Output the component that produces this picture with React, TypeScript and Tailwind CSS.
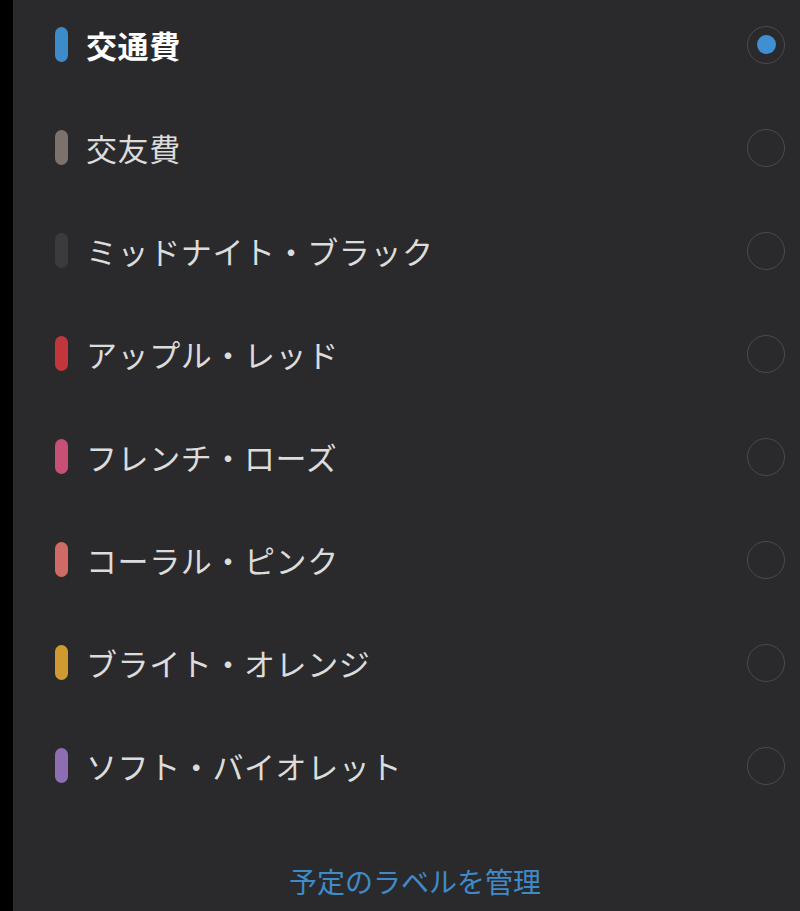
import React from 'react'

type Label = {
  name: string
  color: string
  selected?: boolean
}

const labels: Label[] = [
  { name: '交通費', color: 'bg-[#3d8bc9]', selected: true },
  { name: '交友費', color: 'bg-[#7d716c]' },
  { name: 'ミッドナイト・ブラック', color: 'bg-[#3b3b3d]' },
  { name: 'アップル・レッド', color: 'bg-[#c1363b]' },
  { name: 'フレンチ・ローズ', color: 'bg-[#c84f76]' },
  { name: 'コーラル・ピンク', color: 'bg-[#cf6b65]' },
  { name: 'ブライト・オレンジ', color: 'bg-[#cf9a30]' },
  { name: 'ソフト・バイオレット', color: 'bg-[#8e6db2]' }
]

function Radio({ checked }: { checked?: boolean }) {
  return (
    <div className="w-[38px] h-[38px] rounded-full border-[1.5px] border-[#4b4a4d] flex items-center justify-center">
      {checked ? <div className="w-[19px] h-[19px] rounded-full bg-[#3f8fd2]" /> : null}
    </div>
  )
}

export default function App() {
  return (
    <div
      className="flex w-[800px] h-[911px] overflow-hidden bg-black"
      style={{ fontFamily: '"Noto Sans CJK JP", "Noto Sans", sans-serif' }}
    >
      <div className="w-[13px] shrink-0 bg-black" />
      <div className="flex-1 bg-[#2a2a2c] flex flex-col">
        <ul className="-mt-[7px] flex flex-col">
          {labels.map((label) => (
            <li key={label.name} className="h-[103px] flex items-center pl-[42px] pr-[15px]">
              <span className={`w-[13px] h-[35px] rounded-full shrink-0 ${ label.color }`} />
              <span
                className={
                  label.selected
                    ? 'ml-[18px] flex-1 text-[31px] leading-none tracking-[0.6px] font-bold text-white'
                    : 'ml-[18px] flex-1 text-[31px] leading-none tracking-[0.6px] text-[#dcdcdc]'
                }
              >
                {label.name}
              </span>
              <Radio checked={label.selected} />
            </li>
          ))}
        </ul>
        <div className="mt-[44px] h-10 flex items-center justify-center pl-[17px]">
          <span className="text-[28px] leading-none text-[#3f8bca]">予定のラベルを管理</span>
        </div>
      </div>
    </div>
  )
}
